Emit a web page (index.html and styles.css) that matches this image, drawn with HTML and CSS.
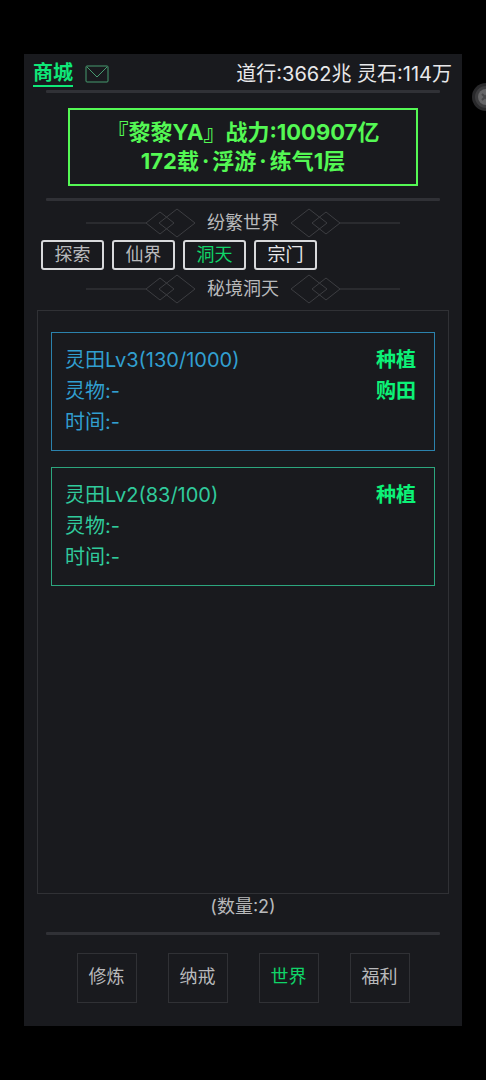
FILE: index.html
```html
<!DOCTYPE html>
<html lang="zh-CN">
<head>
<meta charset="utf-8">
<meta name="viewport" content="width=device-width, initial-scale=1">
<title>秘境洞天</title>
<link rel="stylesheet" href="styles.css">
</head>
<body>
<svg class="defs" aria-hidden="true">
  <symbol id="ornament" viewBox="0 0 110 30">
    <path d="M0 15H60M60 15L74 4L88 15L74 26ZM73 15L91 1L109 15L91 29Z"/>
  </symbol>
</svg>
<div class="app">
  <header class="topbar">
    <a class="shop" href="#">商城</a>
    <button class="mail" type="button" aria-label="邮件">
      <svg viewBox="0 0 24 18" aria-hidden="true"><rect x="1" y="1" width="22" height="16" rx="1"/><path d="M2 2L12 12L22 2"/></svg>
    </button>
    <p class="wealth">道行:3662兆 灵石:114万</p>
  </header>
  <hr class="rule">
  <section class="banner">
    <p>『黎黎YA』战力:100907亿</p>
    <p>172载<span class="dot">·</span>浮游<span class="dot">·</span>练气1层</p>
  </section>
  <hr class="rule">
  <main class="world">
    <h1 class="title">
      <svg class="ornament"><use href="#ornament"/></svg>
      <span>纷繁世界</span>
      <svg class="ornament flip"><use href="#ornament"/></svg>
    </h1>
    <nav class="tabs">
      <button type="button">探索</button>
      <button type="button">仙界</button>
      <button type="button" class="active">洞天</button>
      <button type="button" class="bright">宗门</button>
    </nav>
    <h2 class="title">
      <svg class="ornament"><use href="#ornament"/></svg>
      <span>秘境洞天</span>
      <svg class="ornament flip"><use href="#ornament"/></svg>
    </h2>
    <section class="panel">
      <article class="field blue">
        <div class="info">
          <p>灵田Lv3(130/1000)</p>
          <p>灵物:-</p>
          <p>时间:-</p>
        </div>
        <div class="actions">
          <button type="button">种植</button>
          <button type="button">购田</button>
        </div>
      </article>
      <article class="field teal">
        <div class="info">
          <p>灵田Lv2(83/100)</p>
          <p>灵物:-</p>
          <p>时间:-</p>
        </div>
        <div class="actions">
          <button type="button">种植</button>
        </div>
      </article>
    </section>
    <p class="count">(数量:2)</p>
  </main>
  <hr class="rule">
  <nav class="menu">
    <button type="button">修炼</button>
    <button type="button">纳戒</button>
    <button type="button" class="active">世界</button>
    <button type="button">福利</button>
  </nav>
</div>
<button class="floater" type="button" aria-label="悬浮球">
  <svg viewBox="0 0 28 28" aria-hidden="true"><circle cx="14" cy="14" r="14" fill="#29292b"/><circle cx="14" cy="14" r="11" fill="#3d3d3f"/><circle cx="14" cy="14" r="8" fill="#656567"/><path d="M10 11L16 17M10 17L15 12" stroke="#48484a" stroke-width="2"/></svg>
</button>
</body>
</html>
```
FILE: styles.css
```css
* {
  box-sizing: border-box;
  margin: 0;
}

body {
  position: relative;
  min-height: 100vh;
  padding: 54px 24px;
  display: flex;
  overflow-x: hidden;
  background: #000;
  color: #b8b9bb;
  font-family: Inter, "Noto Sans CJK SC", sans-serif;
  font-size: 18px;
}

button {
  padding: 0;
  border: 0;
  background: none;
  color: inherit;
  font: inherit;
  cursor: pointer;
}

.defs {
  position: absolute;
  width: 0;
  height: 0;
}

.app {
  flex: 1;
  min-width: 0;
  display: flex;
  flex-direction: column;
  padding-bottom: 23px;
  background: #191a1e;
}

.topbar {
  display: flex;
  align-items: center;
  height: 36px;
  padding: 4px 10px 0 9px;
}

.shop {
  height: 26px;
  border-bottom: 2px solid #0fe878;
  color: #0fe878;
  font-size: 20px;
  font-weight: 700;
  line-height: 24px;
  text-decoration: none;
}

.mail {
  width: 24px;
  height: 18px;
  margin-left: 12px;
}

.mail svg {
  display: block;
  fill: none;
  stroke: #469a6e;
}

.wealth {
  margin-left: auto;
  color: #e8e8ea;
  font-size: 20px;
  line-height: 24px;
  white-space: nowrap;
}

.rule {
  height: 3px;
  margin: 0 22px;
  border: 0;
  border-radius: 1px;
  background: #303136;
}

.banner {
  margin: 15px 44px 12px;
  padding: 8px 0;
  border: 2px solid #54f854;
  color: #54f854;
  font-size: 22px;
  font-weight: 700;
  line-height: 29px;
  text-align: center;
  white-space: nowrap;
}

.dot {
  padding: 0 3px;
}

.world {
  flex: 1;
  display: flex;
  flex-direction: column;
  padding: 7px 13px 12px;
}

.title {
  display: flex;
  align-items: center;
  justify-content: center;
  gap: 11px;
  height: 30px;
  font-size: 18px;
  font-weight: 400;
  line-height: 24px;
}

.ornament {
  width: 110px;
  height: 30px;
  fill: none;
  stroke: #3c3d41;
}

.flip {
  transform: scaleX(-1);
}

.tabs {
  display: flex;
  gap: 8px;
  padding: 2px 4px 4px;
}

.tabs button {
  width: 63px;
  height: 30px;
  border: 2px solid #d8d9db;
  border-radius: 3px;
  line-height: 26px;
}

.tabs .bright {
  color: #e8e8ea;
}

.tabs .active,
.menu .active {
  color: #10d468;
}

.panel {
  flex: 1;
  display: flex;
  flex-direction: column;
  gap: 16px;
  margin-top: 6px;
  padding: 21px 13px;
  border: 1px solid #303135;
}

.field {
  display: flex;
  justify-content: space-between;
  padding: 12px 18px 12px 13px;
  border: 1px solid;
  font-size: 20px;
  line-height: 31px;
}

.blue {
  border-color: #2b82ad;
  color: #319fd0;
}

.teal {
  border-color: #2ca67e;
  color: #30ca9c;
}

.actions {
  display: flex;
  flex-direction: column;
  color: #0cf277;
  font-weight: 700;
}

.count {
  line-height: 26px;
  text-align: center;
}

.menu {
  display: flex;
  justify-content: center;
  gap: 31px;
  padding-top: 18px;
}

.menu button {
  width: 60px;
  height: 50px;
  padding-bottom: 6px;
  border: 1px solid #303135;
}

.floater {
  position: absolute;
  top: 83px;
  right: -14px;
  width: 28px;
  height: 28px;
}

.floater svg {
  display: block;
}
```
